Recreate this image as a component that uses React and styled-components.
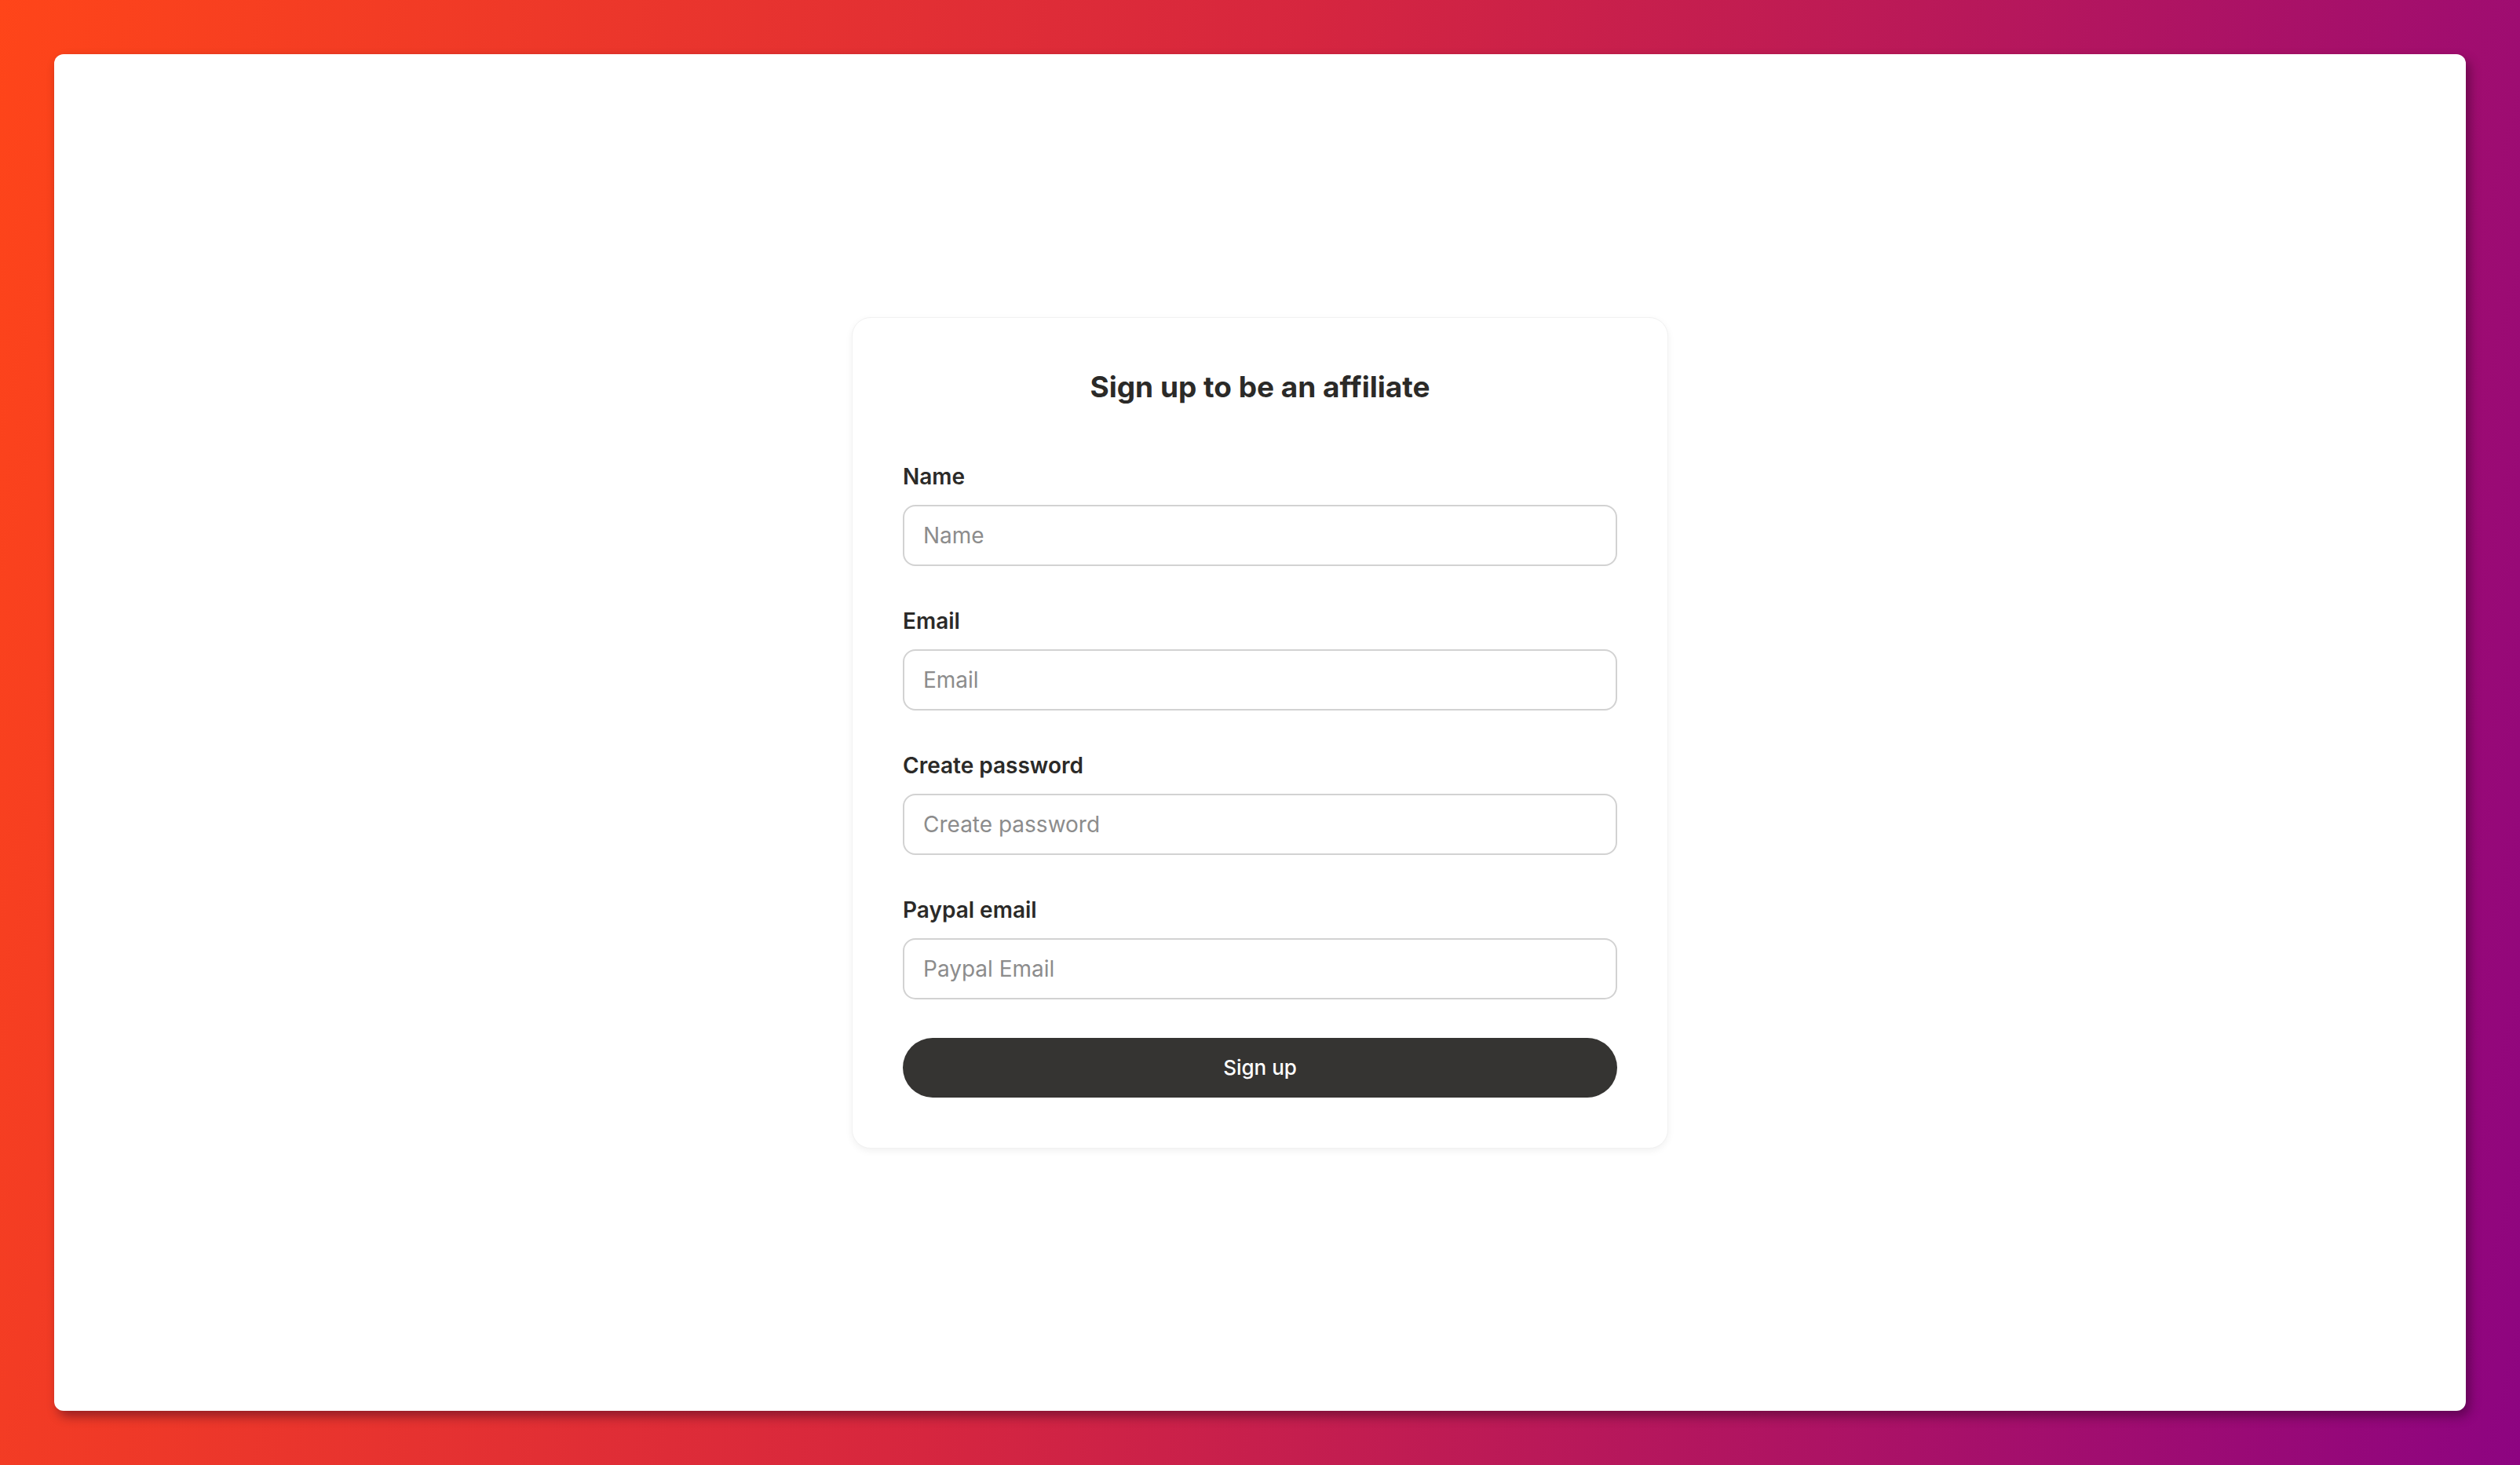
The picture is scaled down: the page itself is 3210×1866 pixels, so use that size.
import React from "react";
import styled, { createGlobalStyle } from "styled-components";

const GlobalStyle = createGlobalStyle`
  html, body, #root {
    margin: 0;
    height: 100%;
  }
  body {
    font-family: Inter, "Noto Sans", sans-serif;
    color: #2a2927;
  }
  * {
    box-sizing: border-box;
  }
`;

const Backdrop = styled.div`
  height: 100%;
  padding: 69px;
  background: linear-gradient(105deg, #ff4519 0%, #d6263f 45%, #8d0481 100%);
`;

const Panel = styled.main`
  height: 100%;
  background: #ffffff;
  border-radius: 12px;
  box-shadow: 5px 7px 14px rgba(40, 0, 30, 0.45);
  display: flex;
  align-items: center;
  justify-content: center;
`;

const Card = styled.form`
  width: 1040px;
  padding: 66px 64px 64px;
  background: #ffffff;
  border: 1px solid #f1f1f1;
  border-radius: 24px;
  box-shadow: 0 3px 10px rgba(0, 0, 0, 0.06);
  display: flex;
  flex-direction: column;
`;

const Title = styled.h1`
  margin: 0 0 74px;
  font-size: 37px;
  line-height: 44px;
  font-weight: 700;
  text-align: center;
  color: #2b2a28;
`;

const Fields = styled.div`
  display: flex;
  flex-direction: column;
  gap: 52px;
`;

const Field = styled.label`
  display: flex;
  flex-direction: column;
  gap: 18px;
`;

const LabelText = styled.span`
  font-size: 28px;
  line-height: 36px;
  font-weight: 600;
  color: #2b2a28;
`;

const Input = styled.input`
  height: 78px;
  width: 100%;
  padding: 0 24px;
  border: 2px solid #d2d2d2;
  border-radius: 16px;
  font-family: inherit;
  font-size: 28px;
  color: #2b2a28;
  background: #fff;
  outline: none;

  &::placeholder {
    color: #8c8c8c;
  }
`;

const SubmitButton = styled.button`
  margin-top: 49px;
  height: 76px;
  width: 100%;
  border: none;
  border-radius: 38px;
  background: #353432;
  color: #ffffff;
  font-family: inherit;
  font-size: 26px;
  font-weight: 500;
  cursor: pointer;
`;

const fields = [
  { label: "Name", placeholder: "Name", type: "text" },
  { label: "Email", placeholder: "Email", type: "email" },
  { label: "Create password", placeholder: "Create password", type: "password" },
  { label: "Paypal email", placeholder: "Paypal Email", type: "email" },
];

export default function App() {
  return (
    <>
      <GlobalStyle />
      <Backdrop>
        <Panel>
          <Card onSubmit={(e) => e.preventDefault()}>
            <Title>Sign up to be an affiliate</Title>
            <Fields>
              {fields.map((f) => (
                <Field key={f.label}>
                  <LabelText>{f.label}</LabelText>
                  <Input type={f.type} placeholder={f.placeholder} />
                </Field>
              ))}
            </Fields>
            <SubmitButton type="submit">Sign up</SubmitButton>
          </Card>
        </Panel>
      </Backdrop>
    </>
  );
}
